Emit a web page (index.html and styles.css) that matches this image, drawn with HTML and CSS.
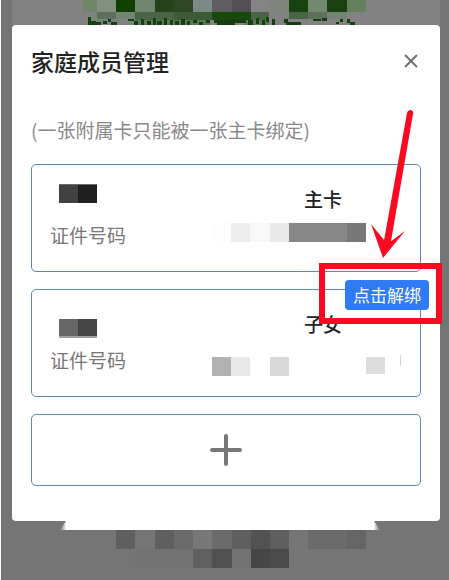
FILE: index.html
```html
<!DOCTYPE html>
<html lang="zh-CN">
<head>
    <meta charset="UTF-8">
    <meta name="viewport" content="width=device-width, initial-scale=1.0">
    <title>家庭成员管理</title>
    <link rel="stylesheet" href="styles.css">
</head>
<body>
    <div class="page">
        <div class="page-top">
            <svg class="mosaic" width="286" height="25" viewBox="83 0 286 25" shape-rendering="crispEdges" aria-hidden="true">
                <path fill="#6f8568" d="M83 0h14v12h-14z"/>
                <path fill="#83907c" d="M97 0h19v12h-19z"/>
                <path fill="#104000" d="M116 0h19v12h-19z"/>
                <path fill="#718470" d="M135 0h20v12h-20z"/>
                <path fill="#25431b" d="M155 0h19v12h-19z"/>
                <path fill="#2d4722" d="M174 0h19v12h-19z"/>
                <path fill="#7c8a86" d="M193 0h19v12h-19z"/>
                <path fill="#5f5c62" d="M212 0h20v12h-20z"/>
                <path fill="#524e56" d="M232 0h19v12h-19z"/>
                <path fill="#868386" d="M251 0h19v12h-19z"/>
                <path fill="#7f857b" d="M270 0h19v12h-19z"/>
                <path fill="#164210" d="M289 0h19v12h-19z"/>
                <path fill="#738871" d="M308 0h19v12h-19z"/>
                <path fill="#1b400f" d="M327 0h20v12h-20z"/>
                <path fill="#64805c" d="M347 0h19v12h-19z"/>
                <path fill="#5e705c" d="M97 12h19v7h-19zM308 12h19v7h-19z"/>
                <path fill="#748374" d="M116 12h19v7h-19zM97 19h22v4h-22zM327 12h20v7h-20z"/>
                <path fill="#4a6545" d="M135 12h39v8h-39zM251 12h18v8h-18zM289 12h19v7h-19z"/>
                <path fill="#3c5a36" d="M174 12h38v8h-38z"/>
                <path fill="#18480c" d="M212 12h39v8h-39z"/>
                <path fill="#5e755c" d="M135 20h75v5h-75zM245 20h24v5h-24z"/>
                <path fill="#143f0e" d="M88 17h3v8h-3zM91 21h5v4h-5zM96 22h5v3h-5zM103 21h4v3h-4zM108 19h3v3h-3zM111 22h6v3h-6zM128 19h6v2h-6zM134 21h4v4h-4zM141 19h3v6h-3zM147 21h4v4h-4zM153 18h3v7h-3zM157 21h5v4h-5zM164 18h3v7h-3zM170 20h3v5h-3zM175 21h4v4h-4zM181 19h4v6h-4zM187 21h3v4h-3zM193 20h4v3h-4zM199 22h4v3h-4zM206 20h4v3h-4zM214 20h32v3h-32zM217 23h18v2h-18zM248 20h5v5h-5zM256 18h3v6h-3zM262 20h3v5h-3zM266 17h3v5h-3zM272 19h3v6h-3zM284 19h4v4h-4zM286 22h15v3h-15zM313 19h8v2h-8zM322 18h5v3h-5zM336 22h3v2h-3zM340 19h3v3h-3zM347 19h3v4h-3zM350 22h5v3h-5z"/>
            </svg>
        </div>

        <main class="modal">
            <header class="modal-header">
                <h1>家庭成员管理</h1>
                <button class="close-btn" type="button" aria-label="关闭">
                    <svg width="16" height="16" viewBox="0 0 16 16">
                        <path d="M2 2L14 14M14 2L2 14" fill="none" stroke="#6f6f6f" stroke-width="2"/>
                    </svg>
                </button>
            </header>

            <p class="hint">(一张附属卡只能被一张主卡绑定)</p>

            <div class="card-list">
                <section class="card">
                    <svg class="name" width="48" height="36" viewBox="0 0 48 36" shape-rendering="crispEdges" aria-hidden="true">
                        <path fill="#414141" d="M9 3h19v19h-19z"/>
                        <path fill="#1f1f1f" d="M28 3h19v19h-19z"/>
                        <path fill="#6b6b6b" d="M9 3h38v1h-38z"/>
                    </svg>
                    <span class="role">主卡</span>
                    <span class="label">证件号码</span>
                    <svg width="190" height="36" viewBox="0 0 190 36" shape-rendering="crispEdges" aria-hidden="true">
                        <path fill="#fdfdfd" d="M0 6h19v19h-19z"/>
                        <path fill="#ececec" d="M19 6h19v19h-19z"/>
                        <path fill="#f8f8f8" d="M38 6h20v19h-20z"/>
                        <path fill="#e9e9e9" d="M58 6h19v19h-19z"/>
                        <path fill="#878787" d="M77 6h58v19h-58z"/>
                        <path fill="#787878" d="M135 6h19v19h-19z"/>
                    </svg>
                </section>

                <section class="card">
                    <svg class="name" width="48" height="36" viewBox="0 0 48 36" shape-rendering="crispEdges" aria-hidden="true">
                        <path fill="#666666" d="M9 13h19v17h-19z"/>
                        <path fill="#444444" d="M28 13h19v17h-19z"/>
                        <path fill="#a0a0a0" d="M9 30h38v2h-38z"/>
                    </svg>
                    <span class="role">子女</span>
                    <span class="label">证件号码</span>
                    <svg width="190" height="36" viewBox="0 0 190 36" shape-rendering="crispEdges" aria-hidden="true">
                        <path fill="#b2b2b2" d="M0 15h19v19h-19z"/>
                        <path fill="#e8e8e8" d="M19 15h19v19h-19z"/>
                        <path fill="#d8d8d8" d="M58 15h19v19h-19z"/>
                        <path fill="#dcdcdc" d="M154 15h19v17h-19z"/>
                        <path fill="#d0d0d0" d="M188 13h1v11h-1z"/>
                    </svg>
                    <button class="unbind-btn" type="button">点击解绑</button>
                    <svg class="pointer" width="123" height="220" viewBox="0 0 123 220" aria-hidden="true">
                        <path d="M3 161H120V216H3Z" fill="none" stroke="#fa0a20" stroke-width="6"/>
                        <path d="M88 8Q89 5 92 5Q95 6 94 9L71 142L64 141Z" fill="#fa0a20"/>
                        <path d="M64 153L52 119L65 135L71 137L86 126Z" fill="#fa0a20"/>
                    </svg>
                </section>

                <button class="add-btn" type="button" aria-label="添加成员">
                    <svg width="32" height="32" viewBox="0 0 32 32">
                        <path d="M2 16H30M16 2V30" fill="none" stroke="#777777" stroke-width="4" stroke-linecap="round"/>
                    </svg>
                </button>
            </div>
        </main>

        <div class="page-bottom">
            <svg class="mosaic" width="332" height="48" viewBox="60 521 332 48" aria-hidden="true">
                <defs>
                    <linearGradient id="edge">
                        <stop offset="0" stop-color="#fff" stop-opacity="0"/>
                        <stop offset="0.02" stop-color="#fff"/>
                        <stop offset="0.98" stop-color="#fff"/>
                        <stop offset="1" stop-color="#fff" stop-opacity="0"/>
                    </linearGradient>
                </defs>
                <path fill="url(#edge)" d="M66 521H374L380 530H60Z"/>
                <g shape-rendering="crispEdges">
                    <path fill="#5f5f5f" d="M116 530h19v19h-19zM155 530h19v19h-19zM232 530h19v19h-19z"/>
                    <path fill="#6b6b6b" d="M174 530h19v19h-19zM212 530h20v19h-20zM308 530h39v19h-39z"/>
                    <path fill="#787878" d="M193 530h19v19h-19z"/>
                    <path fill="#525252" d="M251 530h19v19h-19z"/>
                    <path fill="#5e5e5e" d="M270 530h19v19h-19z"/>
                    <path fill="#656565" d="M347 530h19v19h-19z"/>
                    <path fill="#727272" d="M135 549h58v19h-58zM232 549h19v19h-19z"/>
                    <path fill="#606060" d="M193 549h19v19h-19z"/>
                    <path fill="#505050" d="M212 549h20v19h-20z"/>
                    <path fill="#464646" d="M251 549h19v19h-19z"/>
                    <path fill="#4b4b4b" d="M270 549h19v19h-19z"/>
                </g>
            </svg>
        </div>
    </div>
</body>
</html>
```
FILE: styles.css
```css
/* General Styles */
* {
    box-sizing: border-box;
}

body {
    font-family: "Noto Sans CJK SC", sans-serif;
    background-color: #757575;
    margin: 0;
    color: #222;
}

svg {
    display: block;
}

h1, p {
    margin: 0;
}

button {
    font-family: inherit;
    padding: 0;
    border: none;
    cursor: pointer;
}

/* Page behind the dialog */
.page {
    min-height: 100vh;
    padding: 0 9px 0 11px;
    border-left: 1px solid #fff;
}

.page-top {
    height: 25px;
    background-color: #828282;
}

.page-top .mosaic,
.page-bottom .mosaic {
    margin: 0 auto;
}

/* Dialog */
.modal {
    padding: 16px 19px 35px;
    background-color: #fff;
    border-radius: 4px;
}

.modal-header {
    display: flex;
    justify-content: space-between;
    align-items: center;
    height: 40px;
}

h1 {
    font-size: 23px;
    font-weight: 500;
    line-height: 38px;
}

.close-btn {
    padding: 2px;
    background: none;
}

.hint {
    margin: 35px 0 20px;
    font-size: 19px;
    line-height: 28px;
    color: #888;
}

.card-list {
    display: flex;
    flex-direction: column;
    gap: 17px;
}

.card {
    position: relative;
    display: grid;
    grid-template-columns: 1fr 190px;
    grid-auto-rows: 36px;
    padding: 16px 18px 18px;
    border: 1px solid #5a8ab8;
    border-radius: 5px;
    font-size: 19px;
    line-height: 36px;
}

.role {
    padding-left: 92px;
    font-weight: 500;
}

.label {
    color: #777;
}

.unbind-btn {
    position: absolute;
    top: -10px;
    right: -9px;
    width: 84px;
    height: 30px;
    background-color: #2f7bf5;
    border-radius: 4px;
    color: #fff;
    font-size: 17px;
    line-height: 30px;
}

.pointer {
    position: absolute;
    top: -185px;
    right: -22px;
    pointer-events: none;
}

.add-btn {
    display: flex;
    justify-content: center;
    align-items: center;
    height: 72px;
    background-color: #fff;
    border: 1px solid #5a8ab8;
    border-radius: 5px;
}
```
